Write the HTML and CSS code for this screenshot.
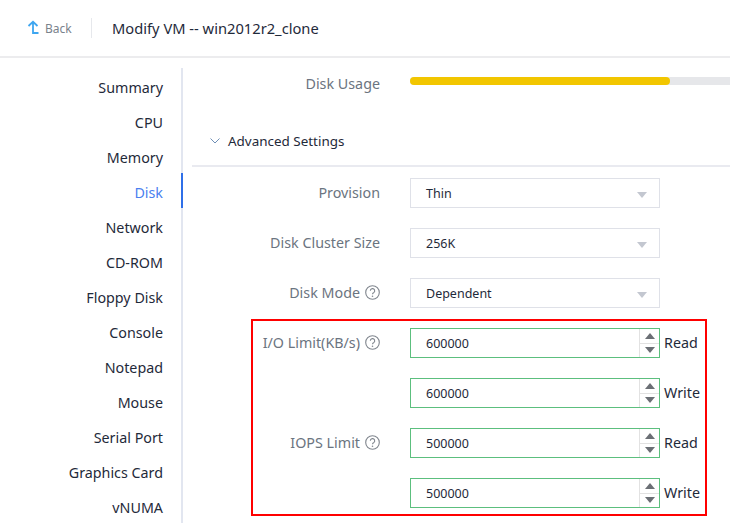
FILE: index.html
```html
<!DOCTYPE html>
<html lang="en">
<head>
<meta charset="utf-8">
<title>Modify VM</title>
<link rel="stylesheet" href="styles.css">
</head>
<body>
<header class="topbar">
  <a class="back">
    <svg class="back-icon" width="12" height="16" viewBox="0 0 12 16"><path d="M1.500 6 6 1.800 10.500 6M6 2v11h5.500" fill="none" stroke="#3ea6f0" stroke-width="1.800"/></svg>
    <span>Back</span>
  </a>
  <span class="divider"></span>
  <h1 class="title">Modify VM -- win2012r2_clone</h1>
</header>
<div class="main">
  <nav class="side">
    <a class="nav-item">Summary</a>
    <a class="nav-item">CPU</a>
    <a class="nav-item">Memory</a>
    <a class="nav-item active">Disk</a>
    <a class="nav-item">Network</a>
    <a class="nav-item">CD-ROM</a>
    <a class="nav-item">Floppy Disk</a>
    <a class="nav-item">Console</a>
    <a class="nav-item">Notepad</a>
    <a class="nav-item">Mouse</a>
    <a class="nav-item">Serial Port</a>
    <a class="nav-item">Graphics Card</a>
    <a class="nav-item">vNUMA</a>
  </nav>
  <section class="content">
    <div class="usage">
      <span class="label">Disk Usage</span>
      <div class="track"><div class="fill"></div></div>
    </div>
    <div class="adv">
      <svg class="chev" width="10" height="6" viewBox="0 0 10 6"><path d="M.5.5 5 5 9.500.5" fill="none" stroke="#6f8fb6" stroke-width="1"/></svg>
      <span>Advanced Settings</span>
    </div>
    <div class="form">
      <div class="row">
        <span class="label">Provision</span>
        <div class="select"><span>Thin</span><i class="caret"></i></div>
      </div>
      <div class="row">
        <span class="label">Disk Cluster Size</span>
        <div class="select"><span>256K</span><i class="caret"></i></div>
      </div>
      <div class="row">
        <span class="label">Disk Mode<svg class="help" width="15" height="15" viewBox="0 0 15 15"><circle cx="7.500" cy="7.500" r="6.800" fill="none" stroke="#80868e" stroke-width="1.100"/><path d="M5.300 5.800a2.200 2.200 0 1 1 3.300 1.900c-.8.400-1.100.8-1.100 1.600" fill="none" stroke="#80868e" stroke-width="1.100"/><circle cx="7.500" cy="11.200" r=".8" fill="#80868e"/></svg></span>
        <div class="select"><span>Dependent</span><i class="caret"></i></div>
      </div>
      <div class="row">
        <span class="label">I/O Limit(KB/s)<svg class="help" width="15" height="15" viewBox="0 0 15 15"><circle cx="7.500" cy="7.500" r="6.800" fill="none" stroke="#80868e" stroke-width="1.100"/><path d="M5.300 5.800a2.200 2.200 0 1 1 3.300 1.900c-.8.400-1.100.8-1.100 1.600" fill="none" stroke="#80868e" stroke-width="1.100"/><circle cx="7.500" cy="11.200" r=".8" fill="#80868e"/></svg></span>
        <div class="spin"><span class="val">600000</span><div class="arrows"><b class="up"></b><b class="down"></b></div></div>
        <span class="unit">Read</span>
      </div>
      <div class="row">
        <span class="label"></span>
        <div class="spin"><span class="val">600000</span><div class="arrows"><b class="up"></b><b class="down"></b></div></div>
        <span class="unit">Write</span>
      </div>
      <div class="row">
        <span class="label">IOPS Limit<svg class="help" width="15" height="15" viewBox="0 0 15 15"><circle cx="7.500" cy="7.500" r="6.800" fill="none" stroke="#80868e" stroke-width="1.100"/><path d="M5.300 5.800a2.200 2.200 0 1 1 3.300 1.900c-.8.400-1.100.8-1.100 1.600" fill="none" stroke="#80868e" stroke-width="1.100"/><circle cx="7.500" cy="11.200" r=".8" fill="#80868e"/></svg></span>
        <div class="spin"><span class="val">500000</span><div class="arrows"><b class="up"></b><b class="down"></b></div></div>
        <span class="unit">Read</span>
      </div>
      <div class="row">
        <span class="label"></span>
        <div class="spin"><span class="val">500000</span><div class="arrows"><b class="up"></b><b class="down"></b></div></div>
        <span class="unit">Write</span>
      </div>
    </div>
  </section>
</div>
<div class="highlight"></div>
</body>
</html>
```
FILE: styles.css
```css
* { box-sizing: border-box; }
html, body { margin: 0; height: 523px; overflow: hidden; background: #fff; }
body { font-family: "Noto Sans", "Open Sans", sans-serif; font-size: 14.300px; color: #1f2a3a; position: relative; }
.topbar { height: 58px; border-bottom: 2px solid #ececee; display: flex; align-items: center; padding: 0 0 0 27px; }
.back { display: flex; align-items: center; gap: 6px; font-size: 12px; color: #7a828c; width: 64px; }
.back-icon { flex: none; }
.divider { width: 1px; height: 20px; background: #e6e8ec; }
.title { margin: 0 0 0 20px; font-size: 14.700px; font-weight: 400; color: #1f2a3a; }
.main { display: flex; height: 465px; }
.side { width: 183px; flex: none; margin-top: 10px; border-right: 2px solid #e2e6f0; height: 455px; }
.nav-item { display: block; height: 35px; line-height: 40px; padding-right: 18px; text-align: right; margin-right: -2px; border-right: 2px solid transparent; }
.nav-item.active { color: #4a7ff0; border-right-color: #2f6fe8; }
.content { flex: 1; margin-left: 9px; min-width: 0; }
.label { width: 188px; flex: none; text-align: right; color: #6b7480; display: inline-flex; justify-content: flex-end; align-items: center; gap: 5px; margin-top: -2px; }
.usage { display: flex; align-items: center; gap: 30px; height: 30px; margin-top: 10px; }
.usage .label { margin-top: 0; }
.track { flex: 1; height: 8px; background: #e6e7ea; margin-top: -4px; border-radius: 4px 0 0 4px; }
.fill { width: 260px; height: 8px; background: #f2c600; border-radius: 4px; }
.adv { height: 50px; margin-top: 19px; display: flex; align-items: center; gap: 8px; padding-left: 18px; border-bottom: 2px solid #e9eaf0; font-size: 13.450px; color: #1f2a3a; }
.form { padding-top: 11px; }
.row { display: flex; align-items: center; gap: 30px; height: 50px; padding-bottom: 20px; }
.select { width: 250px; height: 30px; border: 1px solid #dfe1e8; display: flex; align-items: center; justify-content: space-between; padding: 0 12px 0 15px; font-size: 12.500px; flex: none; }
.caret { width: 0; height: 0; border-left: 5px solid transparent; border-right: 5px solid transparent; border-top: 6px solid #c3c7d0; margin-top: 3px; }
.spin { width: 250px; height: 30px; border: 1px solid #5cbf7e; display: flex; align-items: center; justify-content: space-between; padding-left: 15px; font-size: 12.500px; flex: none; }
.arrows { width: 20px; height: 28px; border-left: 1px solid #e2e2e2; display: flex; flex-direction: column; }
.arrows b { flex: 1; display: flex; align-items: center; justify-content: center; }
.arrows b::before { content: ""; width: 0; height: 0; border-left: 5px solid transparent; border-right: 5px solid transparent; }
.up { border-bottom: 1px solid #e2e2e2; }
.up::before { border-bottom: 6px solid #6b6f75; }
.down::before { border-top: 6px solid #6b6f75; }
.unit { margin-left: -26px; margin-top: -2px; color: #1f2a3a; }
.help { flex: none; }
.highlight { position: absolute; left: 251px; top: 319px; width: 456px; height: 197px; border: 2px solid #f00; pointer-events: none; }
```
